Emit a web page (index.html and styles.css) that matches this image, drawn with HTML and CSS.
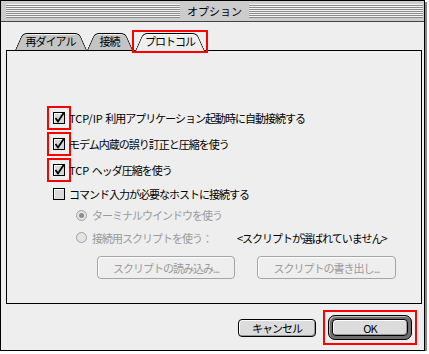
FILE: index.html
```html
<!DOCTYPE html>
<html lang="ja">
<head>
  <meta charset="UTF-8" />
  <title>オプション</title>
  <link rel="stylesheet" href="styles.css">
</head>
<body>
  <div class="window">
    <div class="titlebar">
      <span class="stripes"></span>
      <span class="title">オプション</span>
      <span class="stripes"></span>
    </div>

    <div class="content">
      <div class="tabs">
        <div class="tab tab-redial">再ダイアル</div>
        <div class="tab tab-connect">接続</div>
        <div class="tab tab-protocol active">プロトコル</div>
      </div>

      <div class="panel">
        <div class="row check">
          <svg class="box marked" width="12" height="12" viewBox="0 0 12 12">
            <rect x="0.5" y="0.5" width="11" height="11" fill="#d6d6d6" stroke="#000"/>
            <path d="M1.5 1.5h9M1.5 1.5v9" stroke="#fff"/>
            <path d="M2.5 6l2.5 3.5 6-9" fill="none" stroke="#000" stroke-width="1.8"/>
          </svg>
          <span><span class="latin">TCP/IP </span>利用アプリケーション起動時に自動接続する</span>
        </div>
        <div class="row check">
          <svg class="box marked" width="12" height="12" viewBox="0 0 12 12">
            <rect x="0.5" y="0.5" width="11" height="11" fill="#d6d6d6" stroke="#000"/>
            <path d="M1.5 1.5h9M1.5 1.5v9" stroke="#fff"/>
            <path d="M2.5 6l2.5 3.5 6-9" fill="none" stroke="#000" stroke-width="1.8"/>
          </svg>
          <span>モデム内蔵の誤り訂正と圧縮を使う</span>
        </div>
        <div class="row check">
          <svg class="box marked" width="12" height="12" viewBox="0 0 12 12">
            <rect x="0.5" y="0.5" width="11" height="11" fill="#d6d6d6" stroke="#000"/>
            <path d="M1.5 1.5h9M1.5 1.5v9" stroke="#fff"/>
            <path d="M2.5 6l2.5 3.5 6-9" fill="none" stroke="#000" stroke-width="1.8"/>
          </svg>
          <span><span class="latin">TCP </span>ヘッダ圧縮を使う</span>
        </div>
        <div class="row check host">
          <svg class="box" width="12" height="12" viewBox="0 0 12 12">
            <rect x="0.5" y="0.5" width="11" height="11" fill="#dadada" stroke="#000"/>
            <path d="M1.5 1.5h9M1.5 1.5v9" stroke="#fff"/>
          </svg>
          <span>コマンド入力が必要なホストに接続する</span>
        </div>
        <div class="row radio terminal">
          <svg class="dot" width="11" height="11" viewBox="0 0 11 11">
            <circle cx="5.5" cy="5.5" r="5" fill="#e4e4e4" stroke="#a0a0a0"/>
            <circle cx="5.5" cy="5.5" r="2.5" fill="#8c8c8c"/>
          </svg>
          <span>ターミナルウインドウを使う</span>
        </div>
        <div class="row radio script">
          <svg class="dot" width="11" height="11" viewBox="0 0 11 11">
            <circle cx="5.5" cy="5.5" r="5" fill="#e4e4e4" stroke="#a0a0a0"/>
          </svg>
          <span class="script-label">接続用スクリプトを使う：</span>
          <span class="script-name">&lt;スクリプトが選ばれていません&gt;</span>
        </div>
        <div class="script-buttons">
          <button class="btn disabled load" disabled>スクリプトの読み込み...</button>
          <button class="btn disabled save" disabled>スクリプトの書き出し...</button>
        </div>
      </div>

      <div class="actions">
        <button class="btn cancel">キャンセル</button>
        <div class="ok-mark">
          <div class="default-ring">
            <button class="btn ok">OK</button>
          </div>
        </div>
      </div>
    </div>
  </div>
</body>
</html>
```

FILE: styles.css
```css
:root {
  --face: #eeeeee;
  --title-bg: #cccccc;
  --tab-bg: #c4c4c4;
  --disabled: #9a9a9a;
  --mark: #ff0000;
}

body {
  margin: 0;
  background: #ffffff;
  font-family: "Noto Sans CJK JP", sans-serif;
  font-size: 11px;
  color: #000;
}

.window {
  width: 423px;
  height: 349px;
  border: 1px solid #000;
  background: var(--face);
  box-shadow: 2px 2px 0 #8a8a8a;
  display: flex;
  flex-direction: column;
}

/* title bar */

.titlebar {
  height: 20px;
  border-bottom: 1px solid #444;
  background: var(--title-bg);
  display: flex;
  align-items: center;
  padding: 0 1px 0 5px;
  gap: 7px;
}

.stripes {
  flex: 1;
  height: 14px;
  background: repeating-linear-gradient(to bottom, #f4f4f4 0 1px, #8a8a8a 1px 2px);
}

.title {
  font-size: 11px;
  line-height: 14px;
}

/* tabs */

.content {
  flex: 1;
  padding-top: 11px;
  display: flex;
  flex-direction: column;
}

.tabs {
  height: 17px;
  margin-left: 14px;
  display: flex;
  position: relative;
  z-index: 1;
}

.tab {
  position: relative;
  z-index: 0;
  height: 17px;
  display: flex;
  align-items: center;
  justify-content: center;
  font-size: 11px;
  letter-spacing: -1px;
  line-height: 1;
}

.tab::before,
.tab::after {
  content: "";
  position: absolute;
  top: 0;
  bottom: 0;
  width: 50%;
  background: var(--tab-bg);
  border-top: 1px solid #000;
  z-index: -1;
  transform-origin: bottom;
  box-shadow: inset 0 1px 0 #f2f2f2;
}

.tab::before {
  left: 0;
  border-left: 1px solid #000;
  border-top-left-radius: 5px;
  transform: skewX(-24deg);
}

.tab::after {
  right: 0;
  border-right: 1px solid #000;
  border-top-right-radius: 5px;
  transform: skewX(24deg);
}

.tab-redial { width: 71px; }
.tab-connect { width: 45px; margin-left: 1px; }
.tab-protocol { width: 70px; margin-left: 3px; }

.tab.active {
  outline: 2px solid var(--mark);
  outline-offset: 1px;
}

.tab.active::before,
.tab.active::after {
  background: var(--face);
  bottom: -1px;
  box-shadow: inset 0 1px 0 #fff;
}

/* panel */

.panel {
  box-sizing: border-box;
  width: 416px;
  height: 254px;
  margin-left: 5px;
  border: 1px solid #000;
  padding: 54px 0 0 46px;
  display: flex;
  flex-direction: column;
}

.row {
  display: flex;
  align-items: center;
  height: 26px;
  letter-spacing: -1px;
  white-space: nowrap;
}

.latin {
  letter-spacing: 0;
}

.box {
  flex: none;
  margin-right: 4px;
  overflow: visible;
}

.box.marked {
  outline: 2px solid var(--mark);
  outline-offset: 4px;
}

.row.host {
  height: 21px;
}

.row.radio {
  padding-left: 23px;
  color: var(--disabled);
}

.row.terminal { height: 22px; }
.row.script { height: 23px; }

.dot {
  flex: none;
  margin-right: 5px;
}

.script-label {
  width: 145px;
}

.script-name {
  color: #000;
}

.script-buttons {
  display: flex;
  gap: 22px;
  margin-top: 7px;
  padding-left: 44px;
}

/* buttons */

.btn {
  font-family: inherit;
  font-size: 11px;
  letter-spacing: -1px;
  padding: 0;
  margin: 0;
  background: #dcdcdc;
  color: #000;
  border: 1px solid #000;
  border-radius: 4px;
  box-shadow: inset 1px 1px 0 #fff, inset -1px -1px 0 #999;
}

.btn.disabled {
  height: 23px;
  color: var(--disabled);
  border-color: #a4a4a4;
  background: var(--face);
  box-shadow: inset 1px 1px 0 #fff;
}

.btn.load { width: 138px; }
.btn.save { width: 139px; }

.actions {
  flex: 1;
  display: flex;
  justify-content: flex-end;
  align-items: center;
  gap: 12px;
  padding: 1px 12px 0 0;
}

.btn.cancel {
  width: 78px;
  height: 18px;
}

.ok-mark {
  display: flex;
  outline: 2px solid var(--mark);
  outline-offset: 3px;
}

.default-ring {
  box-sizing: border-box;
  width: 84px;
  height: 25px;
  padding: 3px;
  border: 1px solid #000;
  border-radius: 7px;
  background: #6e6e6e;
  box-shadow: inset 1px 1px 0 #bbb;
  display: flex;
}

.btn.ok {
  flex: 1;
  border-radius: 4px;
}
```
